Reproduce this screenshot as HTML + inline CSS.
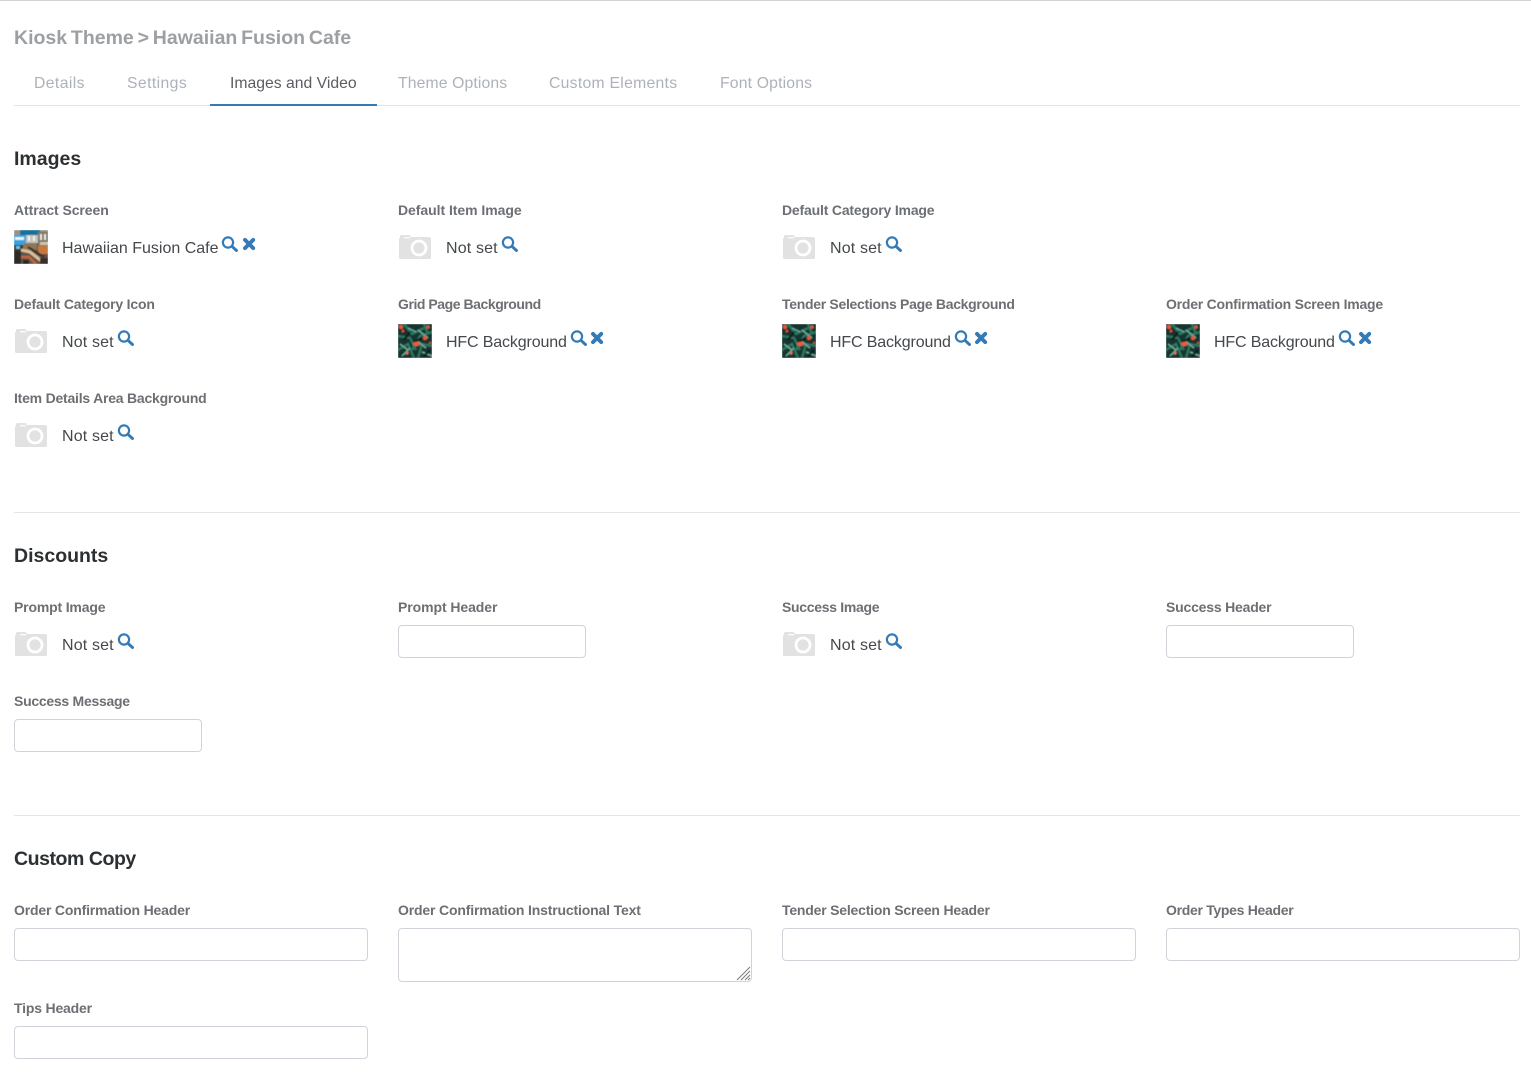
<!DOCTYPE html>
<html lang="en">
<head>
<meta charset="utf-8">
<title>Kiosk Theme</title>
<style>
html,body{margin:0;padding:0;background:#fff}
body{position:relative;width:1531px;height:1090px;overflow:hidden;font-family:"Liberation Sans",sans-serif;border-top:0}
.a{position:absolute;white-space:nowrap}
.top{left:0;top:0;width:1531px;height:1px;background:#cfd3d6}
h1{position:absolute;margin:0;left:14px;top:26px;line-height:24px;font-size:19.5px;word-spacing:-1.6px;font-weight:bold;color:#9da0a3;white-space:nowrap}
.tab{position:absolute;top:74px;line-height:20px;font-size:15.75px;color:#adb2b8;white-space:nowrap}
.tab.on{color:#5a5d61}
.rule{position:absolute;left:14px;width:1506px;height:1px;background:#e2e4e6}
h2{position:absolute;margin:0;left:14px;line-height:24px;font-size:19.5px;font-weight:bold;color:#2c3033;white-space:nowrap}
label{position:absolute;line-height:20px;font-size:14px;font-weight:bold;color:#6c6f73;white-space:nowrap}
.v{position:absolute;line-height:20px;font-size:16px;color:#44474b;white-space:nowrap}
.n{letter-spacing:.15px}
.h{letter-spacing:-.14px}
svg.i{position:absolute;overflow:visible}
input,textarea{position:absolute;box-sizing:border-box;margin:0;padding:0;background:#fff;border:1px solid #d0d3da;border-radius:4px;outline:0}
textarea{resize:none}
</style>
</head>
<body>
<svg width="0" height="0" style="position:absolute">
<defs>
<filter id="b" x="0" y="0" width="1" height="1"><feGaussianBlur stdDeviation="0.55"/></filter>
<symbol id="s" viewBox="0.3 0.5 16 15" overflow="visible"><circle cx="6.3" cy="6" r="5.1" fill="none" stroke="#337ab7" stroke-width="2.2"/><path d="M10.2 9.8L14.8 14" fill="none" stroke="#337ab7" stroke-width="2.9" stroke-linecap="round"/></symbol>
<symbol id="x" viewBox="0.4 0.5 13 13" overflow="visible"><path d="M2.4 2.4L10.6 10.6M10.6 2.4L2.4 10.6" fill="none" stroke="#337ab7" stroke-width="3.9" stroke-linecap="round"/></symbol>
<symbol id="c" viewBox="0 0 34 34"><path d="M2 8V6.5C2 5.7 2.6 5 3.4 5H11C11.8 5 12.4 5.7 12.4 6.5V7H31C32.2 7 33 7.8 33 9V27.6C33 28.6 32.2 29 31 29H3C1.8 29 1 28.6 1 27.6V9C1 8.4 1.4 8 2 8Z" fill="#e2e2e2"/><rect x="6" y="7" width="6" height="1.4" fill="#fafafa"/><circle cx="21" cy="18" r="7" fill="#e2e2e2" stroke="#fff" stroke-width="2.8"/></symbol>
<symbol id="leaf" viewBox="0 0 34 34"><g filter="url(#b)"><rect width="34" height="34" fill="#17352e"/>
<path d="M6 0L14 10L26 4M0 12L12 14L18 26M34 8L22 12L14 26M0 26L10 20L16 34M34 22L24 20L20 34M26 0L30 10" fill="none" stroke="#2f7561" stroke-width="2.4"/>
<path d="M2 20L10 26M20 6L30 14M4 32L12 24M24 28L34 32M10 4L18 8M18 16L28 24" fill="none" stroke="#6aaf97" stroke-width="1.5"/>
<path d="M0 4L8 8M16 18L24 14M26 32L32 26M6 16L12 8" fill="none" stroke="#0c1f1b" stroke-width="2.2"/>
<circle cx="3" cy="3" r="2.3" fill="#db5a40"/><circle cx="5" cy="7" r="1.5" fill="#c9543e"/><circle cx="30" cy="3" r="1.8" fill="#d9573f"/><circle cx="27" cy="14" r="2.2" fill="#e4553c"/><ellipse cx="18.5" cy="20" rx="3.6" ry="2.3" fill="#e75c40"/><circle cx="9" cy="29" r="1.7" fill="#c07a6a"/><circle cx="32" cy="19" r="1.2" fill="#b85440"/></g></symbol>
<symbol id="cafe" viewBox="0 0 34 34"><g filter="url(#b)"><rect width="34" height="34" fill="#5e5249"/>
<rect width="34" height="5" fill="#9a9282"/><rect x="6" width="20" height="5" fill="#17719b"/><rect x="0" y="5" width="12" height="10" fill="#35a3e0"/><rect x="1" y="7" width="9" height="3" fill="#e6f2f7"/><rect x="12" y="5" width="12" height="8" fill="#bfc3bb"/><rect x="14" y="6" width="2" height="5" fill="#f4f6f1"/><rect x="19" y="6" width="2" height="5" fill="#f4f6f1"/><rect x="24" y="2" width="10" height="14" fill="#7f7767"/><rect x="26" y="4" width="2" height="6" fill="#eeece2"/><rect x="30" y="4" width="2" height="6" fill="#eeece2"/><rect x="26" y="12" width="8" height="3" fill="#d0c5a8"/>
<rect x="0" y="15" width="9" height="6" fill="#363432"/><rect x="2" y="16" width="4" height="3" fill="#73bde0"/><rect x="9" y="13" width="14" height="7" fill="#8f7656"/><rect x="24" y="16" width="10" height="8" fill="#c9783a"/><rect x="0" y="21" width="7" height="13" fill="#2e2a28"/>
<path d="M7 20L16 22L30 33" fill="none" stroke="#dcbd98" stroke-width="3.2"/><path d="M7 27L15 27L22 34" fill="none" stroke="#c2683a" stroke-width="2.6"/><path d="M14 17L30 27" fill="none" stroke="#3b322c" stroke-width="2.2"/><rect x="26" y="28" width="8" height="6" fill="#3a2e2a"/><rect x="9" y="30" width="6" height="4" fill="#2f2825"/></g></symbol>
</defs>
</svg>

<div class="a top"></div>
<h1>Kiosk Theme &gt; Hawaiian Fusion Cafe</h1>
<span class="tab" style="left:34px;letter-spacing:.4px">Details</span>
<span class="tab" style="left:127px;letter-spacing:.4px">Settings</span>
<span class="tab on" style="left:230px">Images and Video</span>
<span class="tab" style="left:398px;letter-spacing:.12px">Theme Options</span>
<span class="tab" style="left:549px;letter-spacing:.27px">Custom Elements</span>
<span class="tab" style="left:720px;letter-spacing:.17px">Font Options</span>
<div class="rule" style="top:105px"></div>
<div class="a" style="left:210px;top:104px;width:167px;height:2px;background:#337ab7"></div>

<h2 style="top:147px">Images</h2>

<label style="left:14px;top:200px;letter-spacing:-.07px">Attract Screen</label>
<svg class="i" style="left:14px;top:230px" width="34" height="34"><use href="#cafe"/></svg>
<span class="v" style="left:62px;top:239px">Hawaiian Fusion Cafe</span>
<svg class="i" style="left:222px;top:237px" width="16" height="15"><use href="#s"/></svg>
<svg class="i" style="left:243px;top:238px" width="13" height="13"><use href="#x"/></svg>

<label style="left:398px;top:200px;letter-spacing:-.05px">Default Item Image</label>
<svg class="i" style="left:398px;top:230px" width="34" height="34"><use href="#c"/></svg>
<span class="v n" style="left:446px;top:239px">Not set</span>
<svg class="i" style="left:502px;top:237px" width="16" height="15"><use href="#s"/></svg>

<label style="left:782px;top:200px;letter-spacing:-.18px">Default Category Image</label>
<svg class="i" style="left:782px;top:230px" width="34" height="34"><use href="#c"/></svg>
<span class="v n" style="left:830px;top:239px">Not set</span>
<svg class="i" style="left:886px;top:237px" width="16" height="15"><use href="#s"/></svg>

<label style="left:14px;top:294px;letter-spacing:-.19px">Default Category Icon</label>
<svg class="i" style="left:14px;top:324px" width="34" height="34"><use href="#c"/></svg>
<span class="v n" style="left:62px;top:333px">Not set</span>
<svg class="i" style="left:118px;top:331px" width="16" height="15"><use href="#s"/></svg>

<label style="left:398px;top:294px;letter-spacing:-.45px">Grid Page Background</label>
<svg class="i" style="left:398px;top:324px" width="34" height="34"><use href="#leaf"/></svg>
<span class="v h" style="left:446px;top:333px">HFC Background</span>
<svg class="i" style="left:571px;top:331px" width="16" height="15"><use href="#s"/></svg>
<svg class="i" style="left:591px;top:332px" width="13" height="13"><use href="#x"/></svg>

<label style="left:782px;top:294px;letter-spacing:-.3px">Tender Selections Page Background</label>
<svg class="i" style="left:782px;top:324px" width="34" height="34"><use href="#leaf"/></svg>
<span class="v h" style="left:830px;top:333px">HFC Background</span>
<svg class="i" style="left:955px;top:331px" width="16" height="15"><use href="#s"/></svg>
<svg class="i" style="left:975px;top:332px" width="13" height="13"><use href="#x"/></svg>

<label style="left:1166px;top:294px;letter-spacing:-.23px">Order Confirmation Screen Image</label>
<svg class="i" style="left:1166px;top:324px" width="34" height="34"><use href="#leaf"/></svg>
<span class="v h" style="left:1214px;top:333px">HFC Background</span>
<svg class="i" style="left:1339px;top:331px" width="16" height="15"><use href="#s"/></svg>
<svg class="i" style="left:1359px;top:332px" width="13" height="13"><use href="#x"/></svg>

<label style="left:14px;top:388px;letter-spacing:-.22px">Item Details Area Background</label>
<svg class="i" style="left:14px;top:418px" width="34" height="34"><use href="#c"/></svg>
<span class="v n" style="left:62px;top:427px">Not set</span>
<svg class="i" style="left:118px;top:425px" width="16" height="15"><use href="#s"/></svg>

<div class="rule" style="top:512px"></div>
<h2 style="top:544px">Discounts</h2>

<label style="left:14px;top:597px;letter-spacing:-.17px">Prompt Image</label>
<svg class="i" style="left:14px;top:627px" width="34" height="34"><use href="#c"/></svg>
<span class="v n" style="left:62px;top:636px">Not set</span>
<svg class="i" style="left:118px;top:634px" width="16" height="15"><use href="#s"/></svg>

<label style="left:398px;top:597px;letter-spacing:-.08px">Prompt Header</label>
<input type="text" style="left:398px;top:625px;width:188px;height:33px">

<label style="left:782px;top:597px;letter-spacing:-.3px">Success Image</label>
<svg class="i" style="left:782px;top:627px" width="34" height="34"><use href="#c"/></svg>
<span class="v n" style="left:830px;top:636px">Not set</span>
<svg class="i" style="left:886px;top:634px" width="16" height="15"><use href="#s"/></svg>

<label style="left:1166px;top:597px;letter-spacing:-.2px">Success Header</label>
<input type="text" style="left:1166px;top:625px;width:188px;height:33px">

<label style="left:14px;top:691px;letter-spacing:-.27px">Success Message</label>
<input type="text" style="left:14px;top:719px;width:188px;height:33px">

<div class="rule" style="top:815px"></div>
<h2 style="top:847px;letter-spacing:-.45px">Custom Copy</h2>

<label style="left:14px;top:900px;letter-spacing:-.18px">Order Confirmation Header</label>
<input type="text" style="left:14px;top:928px;width:354px;height:33px">

<label style="left:398px;top:900px;letter-spacing:-.16px">Order Confirmation Instructional Text</label>
<textarea style="left:398px;top:928px;width:354px;height:54px"></textarea>
<svg class="i" style="left:736px;top:966px" width="15" height="15"><path d="M1 14L14 1M5 14L14 5M9 14L14 9M12 14L14 12" fill="none" stroke="#77797c" stroke-width="1"/></svg>

<label style="left:782px;top:900px;letter-spacing:-.2px">Tender Selection Screen Header</label>
<input type="text" style="left:782px;top:928px;width:354px;height:33px">

<label style="left:1166px;top:900px;letter-spacing:-.3px">Order Types Header</label>
<input type="text" style="left:1166px;top:928px;width:354px;height:33px">

<label style="left:14px;top:998px;letter-spacing:-.18px">Tips Header</label>
<input type="text" style="left:14px;top:1026px;width:354px;height:33px">
</body>
</html>
